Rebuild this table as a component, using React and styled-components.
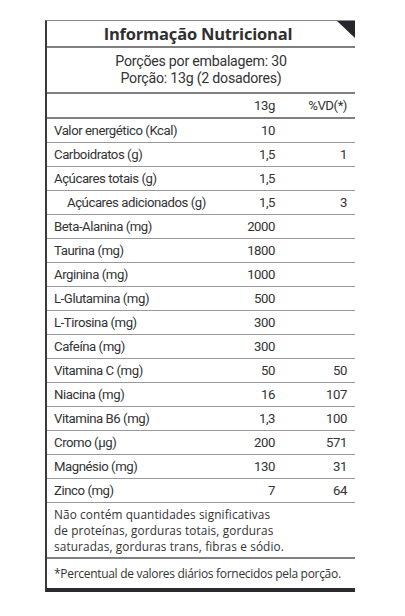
import React from "react";
import styled, { createGlobalStyle } from "styled-components";

const GlobalStyle = createGlobalStyle`
  html, body {
    margin: 0;
    padding: 0;
    background: #ffffff;
  }
  body {
    font-family: Roboto, "Liberation Sans", sans-serif;
    color: #333333;
  }
`;

const rows = [
  { name: "Valor energético (Kcal)", qty: "10", vd: "" },
  { name: "Carboidratos (g)", qty: "1,5", vd: "1" },
  { name: "Açúcares totais (g)", qty: "1,5", vd: "" },
  { name: "Açúcares adicionados (g)", qty: "1,5", vd: "3", indent: true },
  { name: "Beta-Alanina (mg)", qty: "2000", vd: "" },
  { name: "Taurina (mg)", qty: "1800", vd: "" },
  { name: "Arginina (mg)", qty: "1000", vd: "" },
  { name: "L-Glutamina (mg)", qty: "500", vd: "" },
  { name: "L-Tirosina (mg)", qty: "300", vd: "" },
  { name: "Cafeína (mg)", qty: "300", vd: "" },
  { name: "Vitamina C (mg)", qty: "50", vd: "50" },
  { name: "Niacina (mg)", qty: "16", vd: "107" },
  { name: "Vitamina B6 (mg)", qty: "1,3", vd: "100" },
  { name: "Cromo (µg)", qty: "200", vd: "571" },
  { name: "Magnésio (mg)", qty: "130", vd: "31" },
  { name: "Zinco (mg)", qty: "7", vd: "64" },
];

function App() {
  return (
    <>
      <GlobalStyle />
      <Page>
        <Label>
          <Title>
            Informação Nutricional
            <Corner />
          </Title>
          <Servings>
            <div>Porções por embalagem: 30</div>
            <div>Porção: 13g (2 dosadores)</div>
          </Servings>
          <HeadRow>
            <Cell />
            <Num>13g</Num>
            <Vd>%VD(*)</Vd>
          </HeadRow>
          {rows.map((r, i) => (
            <Row key={i}>
              <Cell indent={r.indent}>{r.name}</Cell>
              <Num>{r.qty}</Num>
              <Vd>{r.vd}</Vd>
            </Row>
          ))}
          <Note>
            <div>Não contém quantidades significativas</div>
            <div>de proteínas, gorduras totais, gorduras</div>
            <div>saturadas, gorduras trans, fibras e sódio.</div>
          </Note>
          <Foot>*Percentual de valores diários fornecidos pela porção.</Foot>
        </Label>
      </Page>
    </>
  );
}

const Page = styled.div`
  padding: 20px 0 0 45px;
  width: 405px;
  box-sizing: border-box;
`;

const Label = styled.div`
  width: 308px;
  border-left: 2px solid #3a3a3a;
  border-top: 1px solid #8a8a8a;
  border-bottom: 4px solid #2b2b2f;
  background: #ffffff;
`;

const Title = styled.div`
  position: relative;
  height: 25px;
  display: flex;
  align-items: center;
  justify-content: center;
  padding-right: 6px;
  font-family: "Open Sans", sans-serif;
  font-weight: 700;
  font-size: 16.5px;
  letter-spacing: -0.2px;
  color: #2f2f2f;
  border-bottom: 2px solid #808080;
`;

const Corner = styled.span`
  position: absolute;
  top: 0;
  right: 0;
  width: 0;
  height: 0;
  border-top: 17px solid #26262c;
  border-left: 18px solid transparent;
`;

const Servings = styled.div`
  height: 44px;
  display: flex;
  flex-direction: column;
  justify-content: center;
  align-items: center;
  font-size: 14.2px;
  letter-spacing: -0.25px;
  line-height: 16.6px;
  color: #333;
  border-bottom: 2px solid #808080;
`;

const Row = styled.div`
  height: 23px;
  display: flex;
  align-items: center;
  font-size: 13.2px;
  letter-spacing: -0.45px;
  color: #333;
  border-bottom: 1px solid #9a9a9a;
`;

const HeadRow = styled(Row)`
  height: 23px;
  border-bottom: 2px solid #808080;
`;

const Cell = styled.div`
  flex: 1;
  padding-left: ${(p) => (p.indent ? "20px" : "7px")};
  white-space: nowrap;
`;

const Num = styled.div`
  width: 60px;
  text-align: right;
  padding-right: 6px;
`;

const Vd = styled.div`
  width: 66px;
  text-align: right;
  padding-right: 8px;
`;

const Note = styled.div`
  height: 54px;
  display: flex;
  flex-direction: column;
  justify-content: center;
  padding-left: 7px;
  font-family: "Open Sans", sans-serif;
  font-size: 11.8px;
  letter-spacing: 0.12px;
  line-height: 16.2px;
  color: #333;
  white-space: nowrap;
  border-bottom: 2px solid #808080;
`;

const Foot = styled.div`
  height: 29px;
  display: flex;
  align-items: center;
  padding-left: 7px;
  font-family: "Open Sans", sans-serif;
  font-size: 12px;
  letter-spacing: -0.3px;
  white-space: nowrap;
  color: #333;
`;

export default App;
